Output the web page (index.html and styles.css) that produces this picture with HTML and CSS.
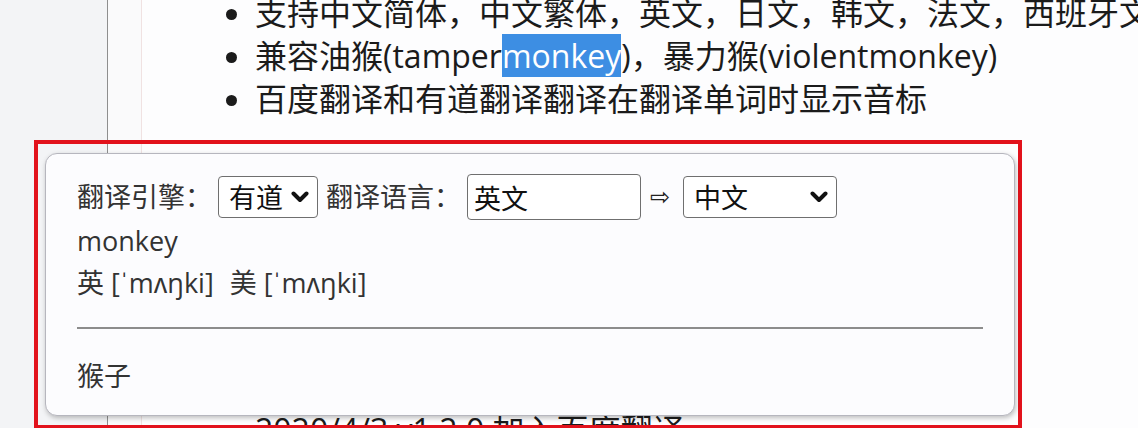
FILE: index.html
```html
<!DOCTYPE html>
<html lang="zh-CN">
<head>
    <meta charset="UTF-8">
    <meta name="viewport" content="width=device-width, initial-scale=1.0">
    <title>划词翻译</title>
    <link rel="stylesheet" href="styles.css">
</head>
<body>
    <div class="page">
        <aside class="sidebar"></aside>
        <div class="gutter"></div>
        <main class="doc">
            <ul class="features">
                <li>支持中文简体，中文繁体，英文，日文，韩文，法文，西班牙文</li>
                <li>兼容油猴(tamper<span class="selected">monkey</span>)，暴力猴(violentmonkey)</li>
                <li>百度翻译和有道翻译翻译在翻译单词时显示音标</li>
            </ul>
            <ul class="changelog">
                <li>2020/4/3 v1.2.0 加入百度翻译</li>
            </ul>
        </main>
    </div>

    <div class="annot">
        <div class="popup">
            <div class="controls">
                <span class="label">翻译引擎：</span>
                <span class="select-wrap engine">
                    <select><option>有道</option><option>百度</option></select>
                    <svg class="chevron" width="18" height="12" viewBox="0 0 18 12"><polyline points="2.5,2.5 9,9 15.5,2.5" fill="none" stroke="#111" stroke-width="4" stroke-linecap="round" stroke-linejoin="round"/></svg>
                </span>
                <span class="label">翻译语言：</span>
                <input class="source" type="text" value="英文">
                <span class="arrow">⇨</span>
                <span class="select-wrap target">
                    <select><option>中文</option><option>英文</option></select>
                    <svg class="chevron" width="18" height="12" viewBox="0 0 18 12"><polyline points="2.5,2.5 9,9 15.5,2.5" fill="none" stroke="#111" stroke-width="4" stroke-linecap="round" stroke-linejoin="round"/></svg>
                </span>
            </div>
            <div class="word">monkey</div>
            <div class="phonetic">
                <span class="ph">英 [ˈmʌŋki]</span>
                <span class="ph">美 [ˈmʌŋki]</span>
            </div>
            <hr>
            <div class="meaning">猴子</div>
        </div>
    </div>
</body>
</html>
```

FILE: styles.css
```css
* {
    box-sizing: border-box;
}
html, body {
    margin: 0;
}
body {
    width: 1138px;
    height: 428px;
    overflow: hidden;
    position: relative;
    background: #fdfdfe;
    font-family: "Open Sans", "Noto Sans CJK SC", sans-serif;
}
.page {
    display: flex;
    height: 100%;
}
.sidebar {
    flex: none;
    width: 108px;
    background: #f3f4f6;
    border-right: 1px solid #8e8e8e;
}
.gutter {
    flex: none;
    width: 34px;
    background: #fafafb;
    border-right: 1px solid #f0e2e2;
}
.doc {
    flex: 1;
    min-width: 0;
    overflow: hidden;
    margin-top: -9px;
    padding-left: 73px;
    color: #1b1b1b;
    font-size: 32px;
    line-height: 43px;
    white-space: nowrap;
}
.doc ul {
    margin: 0;
    padding-left: 40px;
}
.doc .changelog {
    margin-top: 288px;
}
.selected {
    background: #3d8ee3;
    color: #fff;
}

/* red annotation around the popup */
.annot {
    position: absolute;
    left: 34px;
    top: 140px;
    border: 4px solid #e2121c;
    padding: 9px 3px 9px 7px;
}
.popup {
    width: 970px;
    background: #fcfcfe;
    border: 1px solid #b6b6be;
    border-radius: 12px;
    box-shadow: 1px 2px 5px rgba(0, 0, 0, 0.25);
    padding: 20px 31px 18px;
    color: #333;
    font-size: 27px;
    line-height: 42px;
}
.controls {
    display: flex;
    align-items: center;
    gap: 6px;
    height: 46px;
}
.select-wrap {
    position: relative;
    display: flex;
}
.select-wrap select {
    appearance: none;
    -webkit-appearance: none;
    height: 42px;
    padding: 0 10px;
    border: 1px solid #6f6f6f;
    border-radius: 4px;
    background: #fff;
    color: #111;
    font: inherit;
    font-size: 27px;
}
.engine select {
    width: 100px;
}
.engine {
    margin-right: 2px;
}
.target select {
    width: 154px;
}
.chevron {
    position: absolute;
    right: 9px;
    top: 15px;
    pointer-events: none;
}
.source {
    width: 174px;
    height: 46px;
    padding: 0 6px;
    border: 1px solid #6f6f6f;
    border-radius: 4px;
    background: #fff;
    color: #111;
    font: inherit;
    font-size: 27px;
}
.arrow {
    font-family: "DejaVu Sans", sans-serif;
    font-size: 24px;
    color: #222;
    margin: 0 7px 0 3px;
}
.ph {
    margin-right: 9px;
}
.popup hr {
    border: 0;
    border-top: 2px solid #8c8c8c;
    margin: 23px 0 26px;
}
```
